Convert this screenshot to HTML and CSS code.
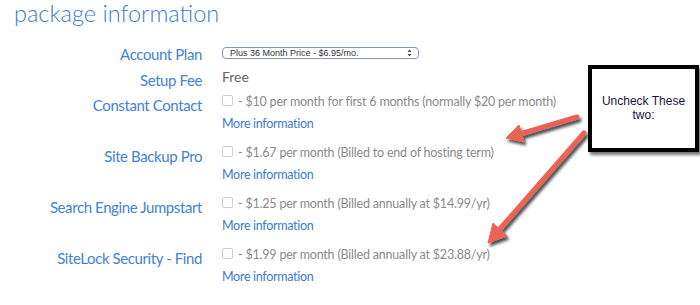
FILE: index.html
```html
<!DOCTYPE html>
<html>
<head>
<meta charset="utf-8">
<link rel="stylesheet" href="styles.css">
</head>
<body>
<main class="page">
  <h1 class="title">package information</h1>
  <div class="form">
    <div class="row row-plan">
      <div class="label">Account Plan</div>
      <div class="value">
        <div class="select">
          <span class="select-text">Plus 36 Month Price - $6.95/mo.</span>
          <svg class="select-arrows" width="5" height="8" viewBox="0 0 5 8"><path d="M2.5 0.5 L4.5 3 H0.5 Z M2.5 7.5 L4.5 5 H0.5 Z" fill="#444"/></svg>
        </div>
      </div>
    </div>
    <div class="row row-fee">
      <div class="label">Setup Fee</div>
      <div class="value"><span class="free">Free</span></div>
    </div>
    <div class="row row-opt">
      <div class="label">Constant Contact</div>
      <div class="value">
        <div class="opt"><span class="box"></span><span class="desc">- $10 per month for first 6 months (normally $20 per month)</span></div>
        <a class="more">More information</a>
      </div>
    </div>
    <div class="row row-opt">
      <div class="label">Site Backup Pro</div>
      <div class="value">
        <div class="opt"><span class="box"></span><span class="desc">- $1.67 per month (Billed to end of hosting term)</span></div>
        <a class="more">More information</a>
      </div>
    </div>
    <div class="row row-opt">
      <div class="label">Search Engine Jumpstart</div>
      <div class="value">
        <div class="opt"><span class="box"></span><span class="desc">- $1.25 per month (Billed annually at $14.99/yr)</span></div>
        <a class="more">More information</a>
      </div>
    </div>
    <div class="row row-opt">
      <div class="label">SiteLock Security - Find</div>
      <div class="value">
        <div class="opt"><span class="box"></span><span class="desc">- $1.99 per month (Billed annually at $23.88/yr)</span></div>
        <a class="more">More information</a>
      </div>
    </div>
  </div>

  <div class="callout">Uncheck These<br>two:</div>

  <svg class="arrows" width="700" height="305" viewBox="0 0 700 305">
    <defs>
      <filter id="sh" x="-20%" y="-20%" width="140%" height="140%">
        <feDropShadow dx="2" dy="3" stdDeviation="1.5" flood-color="#000" flood-opacity="0.7"/>
      </filter>
    </defs>
    <g filter="url(#sh)" fill="#ea6354" stroke="#ea6354">
      <line x1="577" y1="117" x2="520" y2="134" stroke-width="5" stroke-linecap="round"/>
      <polygon points="506,138 524,142 519,125" stroke-width="1" stroke-linejoin="round"/>
      <line x1="584" y1="133" x2="499" y2="230" stroke-width="5" stroke-linecap="round"/>
      <polygon points="488,243 507,236 493,223" stroke-width="1" stroke-linejoin="round"/>
    </g>
  </svg>
</main>
</body>
</html>
```

FILE: styles.css
```css
html, body {
  margin: 0;
  padding: 0;
  background: #fff;
}

.page {
  position: relative;
  width: 700px;
  height: 305px;
  overflow: hidden;
  font-family: Lato, "Open Sans", sans-serif;
}

.title {
  margin: 0;
  padding-left: 14px;
  font-size: 23.5px;
  line-height: 26px;
  font-weight: 300;
  color: #3b7cd3;
}

.form {
  margin-top: 13px;
  padding-left: 14px;
}

.row {
  display: grid;
  grid-template-columns: 188px 1fr;
  column-gap: 20px;
}

.row-plan { height: 26px; }
.row-fee { height: 25px; }
.row-opt { height: 51px; }

.label {
  text-align: right;
  font-size: 15px;
  letter-spacing: -0.4px;
  line-height: 24px;
  padding-top: 3px;
  color: #4283d6;
  white-space: nowrap;
}

.value {
  font-size: 12.5px;
  letter-spacing: -0.2px;
  line-height: 24px;
  color: #8a8a8a;
  white-space: nowrap;
}

.select {
  margin-top: 8px;
  height: 10px;
  width: 182px;
  border: 1px solid #8299b8;
  border-radius: 4px;
  display: flex;
  align-items: center;
  justify-content: space-between;
  padding: 0 6px 0 7px;
  box-sizing: content-box;
  background: #fff;
  letter-spacing: 0;
}

.select-text {
  font-family: "Liberation Sans", Arial, sans-serif;
  font-size: 9px;
  line-height: 10px;
  color: #333;
}

.select-arrows {
  display: block;
}

.free {
  font-size: 14px;
  letter-spacing: 0;
  color: #666;
}

.opt {
  display: flex;
  align-items: center;
  height: 24px;
}

.box {
  width: 9px;
  height: 9px;
  border: 1px solid #cfcfcf;
  border-radius: 2px;
  margin-right: 5px;
  margin-top: -3px;
  background: #fff;
}

.more {
  display: block;
  font-size: 12.5px;
  letter-spacing: -0.3px;
  line-height: 20px;
  color: #3b7cd3;
}

.callout {
  position: absolute;
  left: 588px;
  top: 65px;
  width: 103px;
  height: 77px;
  border: 4px solid #000;
  background: #fff;
  box-shadow: 2px 3px 3px rgba(0, 0, 0, 0.55);
  display: flex;
  align-items: center;
  justify-content: center;
  text-align: center;
  font-family: "Liberation Sans", Arial, sans-serif;
  font-size: 12px;
  line-height: 14px;
  color: #1c1040;
  padding-bottom: 2px;
  box-sizing: content-box;
}

.arrows {
  position: absolute;
  left: 0;
  top: 0;
  pointer-events: none;
}
```
